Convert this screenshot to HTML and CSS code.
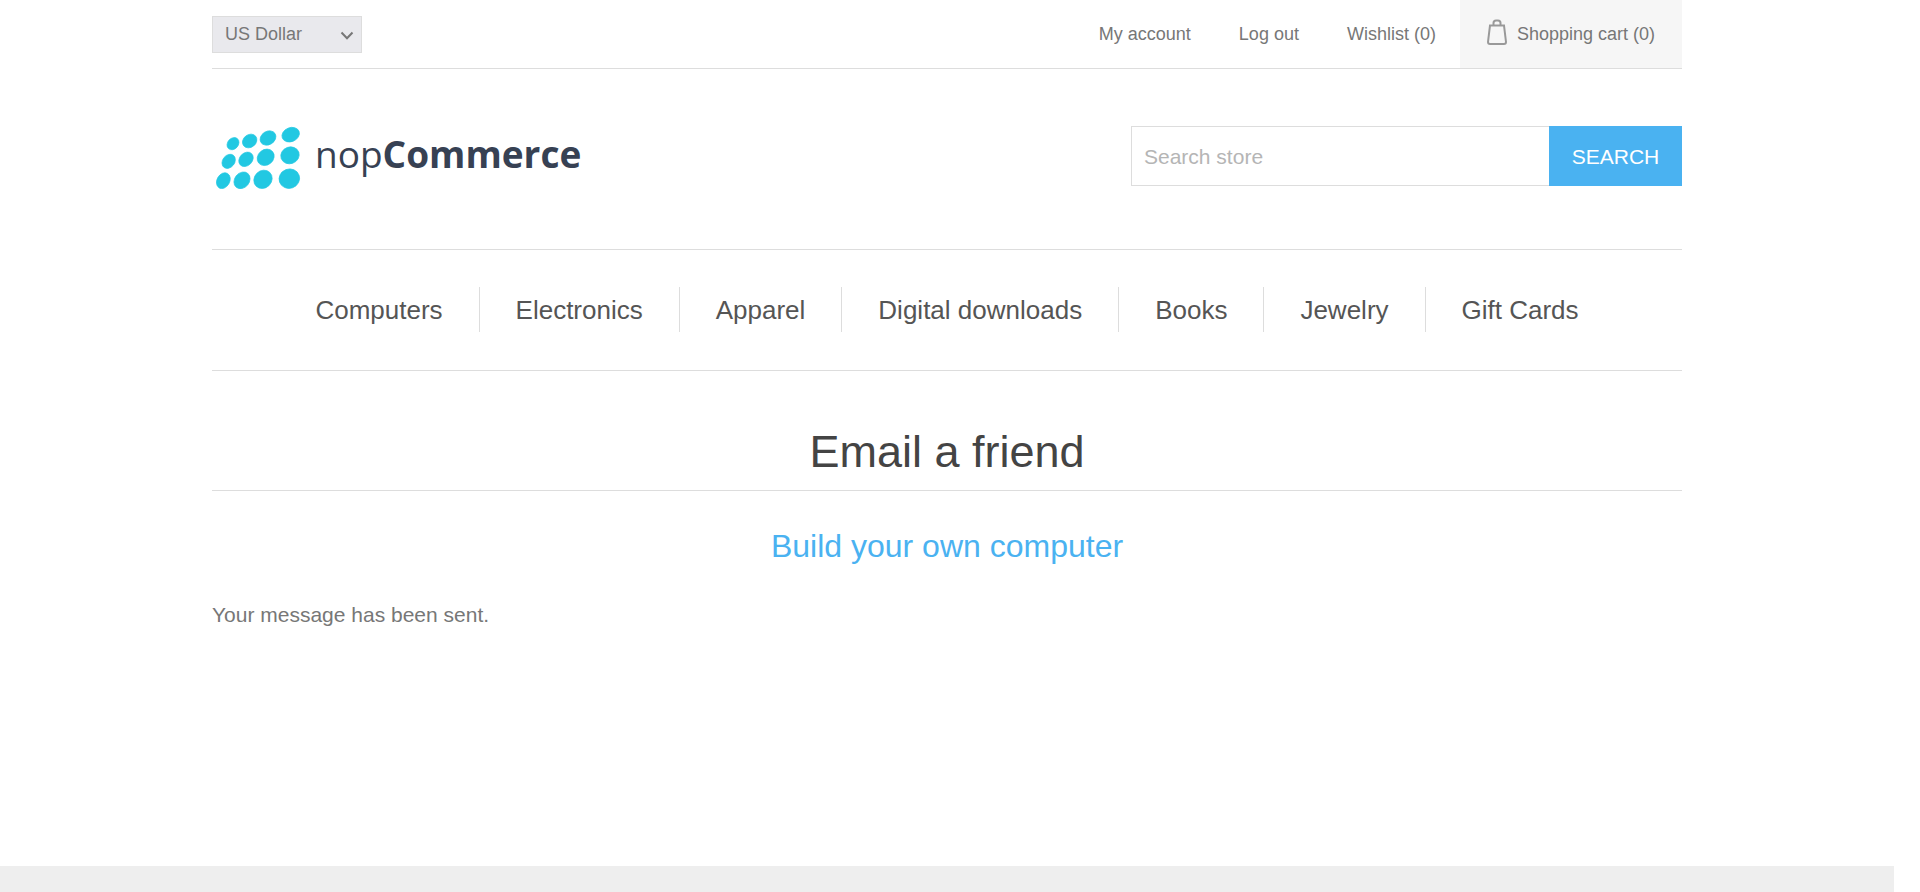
FILE: index.html
```html
<!DOCTYPE html>
<html lang="en">
<head>
<meta charset="utf-8">
<title>nopCommerce - Email a friend</title>
<link rel="stylesheet" href="styles.css">
</head>
<body>
<div class="page">
  <div class="container">
    <div class="topbar">
      <div class="currency">
        <select class="currency-select" aria-label="Currency">
          <option>US Dollar</option>
        </select>
        <svg class="currency-arrow" viewBox="0 0 14 9" aria-hidden="true"><path d="M1.5 1.5 L7 7.2 L12.5 1.5"/></svg>
      </div>
      <div class="toplinks">
        <a class="toplink" href="#">My account</a>
        <a class="toplink" href="#">Log out</a>
        <a class="toplink" href="#">Wishlist (0)</a>
        <a class="cart" href="#">
          <svg class="cart-icon" viewBox="0 0 20 26" aria-hidden="true"><path d="M3 6.5 H17 L19 23 Q19 25 17 25 H3 Q1 25 1 23 Z"/><path d="M6.5 6.5 V4 Q6.5 1.5 9 1.5 H11 Q13.5 1.5 13.5 4 V6.5"/></svg>
          <span>Shopping cart (0)</span>
        </a>
      </div>
    </div>
    <header class="header">
      <a class="logo" href="#">
        <svg class="logo-mark" viewBox="6 9 276 198" aria-hidden="true">
          <ellipse cx="69" cy="71" rx="20" ry="16" transform="rotate(-48 69 71)"/>
          <ellipse cx="119" cy="63" rx="23" ry="19" transform="rotate(-38 119 63)"/>
          <ellipse cx="174" cy="54" rx="25" ry="20" transform="rotate(-32 174 54)"/>
          <ellipse cx="242" cy="44" rx="27" ry="21" transform="rotate(-22 242 44)"/>
          <ellipse cx="56" cy="124" rx="23" ry="18" transform="rotate(-52 56 124)"/>
          <ellipse cx="108" cy="118" rx="24" ry="19" transform="rotate(-45 108 118)"/>
          <ellipse cx="167" cy="112" rx="27" ry="23" transform="rotate(-40 167 112)"/>
          <ellipse cx="240" cy="106" rx="28" ry="25" transform="rotate(-20 240 106)"/>
          <ellipse cx="40" cy="182" rx="25" ry="19" transform="rotate(-60 40 182)"/>
          <ellipse cx="96" cy="181" rx="27" ry="22" transform="rotate(-50 96 181)"/>
          <ellipse cx="159" cy="178" rx="29" ry="26" transform="rotate(-45 159 178)"/>
          <ellipse cx="238" cy="176" rx="31" ry="29" transform="rotate(-20 238 176)"/>
        </svg>
        <span class="logo-text">nop<b>Commerce</b></span>
      </a>
      <form class="search">
        <input class="search-input" type="text" placeholder="Search store" aria-label="Search store">
        <button class="search-button" type="button">SEARCH</button>
      </form>
    </header>
    <nav class="menu">
      <a class="menu-item" href="#">Computers</a>
      <a class="menu-item" href="#">Electronics</a>
      <a class="menu-item" href="#">Apparel</a>
      <a class="menu-item" href="#">Digital downloads</a>
      <a class="menu-item" href="#">Books</a>
      <a class="menu-item" href="#">Jewelry</a>
      <a class="menu-item" href="#">Gift Cards</a>
    </nav>
    <main class="content">
      <h1 class="title">Email a friend</h1>
      <h2 class="product"><a href="#">Build your own computer</a></h2>
      <p class="message">Your message has been sent.</p>
    </main>
  </div>
  <footer class="footer"></footer>
</div>
</body>
</html>
```
FILE: styles.css
```css
* {
  box-sizing: border-box;
}

body {
  margin: 0;
  background: #fff;
  color: #777;
  font-family: "Liberation Sans", Arial, sans-serif;
  font-size: 18px;
}

a {
  color: inherit;
  text-decoration: none;
}

.page {
  display: flex;
  flex-direction: column;
  min-height: 100vh;
  margin-right: 26px;
}

.container {
  flex: 1;
  width: 100%;
  max-width: 1470px;
  margin: 0 auto;
}

.topbar {
  display: flex;
  justify-content: space-between;
  align-items: stretch;
  border-bottom: 1px solid #ddd;
}

.currency {
  position: relative;
  align-self: center;
}

.currency-select {
  appearance: none;
  display: block;
  width: 150px;
  height: 37px;
  padding: 0 12px;
  border: 1px solid #ddd;
  border-radius: 0;
  background: #e9e9ed;
  color: #777;
  font: inherit;
}

.currency-arrow {
  position: absolute;
  top: 15px;
  right: 8px;
  width: 14px;
  height: 9px;
  fill: none;
  stroke: #777;
  stroke-width: 2;
  pointer-events: none;
}

.toplinks {
  display: flex;
  line-height: 68px;
}

.toplink {
  padding: 0 24px;
}

.cart {
  display: flex;
  gap: 10px;
  padding: 0 27px;
  background: #f6f6f6;
}

.cart-icon {
  width: 20px;
  height: 26px;
  margin-top: 19px;
  fill: none;
  stroke: #999;
  stroke-width: 2;
}

.header {
  display: flex;
  justify-content: space-between;
  align-items: center;
  padding: 54px 0 60px;
  border-bottom: 1px solid #ddd;
}

.logo {
  display: flex;
  align-items: center;
  gap: 11px;
}

.logo-mark {
  width: 92px;
  height: 66px;
  fill: #22c8e2;
  stroke: #22c8e2;
  stroke-width: 2;
}

.logo-text {
  padding-bottom: 4px;
  color: #374153;
  font-family: "Open Sans", "Noto Sans", sans-serif;
  font-size: 37px;
  line-height: 60px;
}

.search {
  display: flex;
  width: 551px;
}

.search-input {
  flex: 1;
  min-width: 0;
  height: 60px;
  padding: 2px 12px 0;
  border: 1px solid #ddd;
  border-right: 0;
  background: #fff;
  color: #777;
  font: inherit;
  font-size: 21px;
}

.search-input::placeholder {
  color: #b5b5b5;
}

.search-button {
  width: 133px;
  padding: 2px 0 0;
  border: 0;
  background: #4ab2f1;
  color: #fff;
  font: inherit;
  font-size: 21px;
}

.menu {
  display: flex;
  justify-content: center;
  padding: 37px 0 38px;
  border-bottom: 1px solid #ddd;
  color: #555;
  font-size: 26px;
  line-height: 43px;
}

.menu-item {
  padding: 2px 36px 0;
}

.menu-item + .menu-item {
  border-left: 1px solid #ddd;
}

.title {
  margin: 54px 0 37px;
  padding-bottom: 11px;
  border-bottom: 1px solid #ddd;
  color: #444;
  font-size: 45px;
  font-weight: 400;
  line-height: 54px;
  text-align: center;
}

.product {
  margin: 0 0 39px;
  color: #4ab2f1;
  font-size: 32px;
  font-weight: 400;
  line-height: 36px;
  text-align: center;
}

.message {
  margin: 0;
  font-size: 21px;
  line-height: 24px;
}

.footer {
  height: 26px;
  background: #eee;
}
```
